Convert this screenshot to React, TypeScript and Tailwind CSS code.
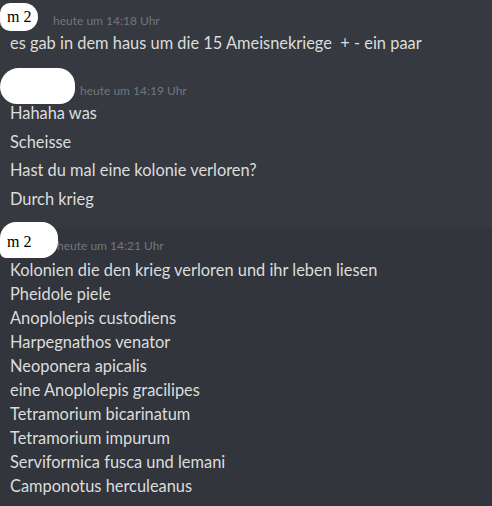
import React from "react";

const font = { fontFamily: "Lato, 'Noto Sans', sans-serif" };

function Line({ children }: { children: React.ReactNode }) {
  return <div className="h-[24px] leading-[24px] pl-[10px] text-[16.4px] text-[#dcddde] whitespace-pre">{children}</div>;
}

function Stamp({ children }: { children: React.ReactNode }) {
  return <span className="text-[12px] text-[#72767d] whitespace-pre">{children}</span>;
}

export default function App() {
  const list = [
    "Kolonien die den krieg verloren und ihr leben liesen",
    "Pheidole piele",
    "Anoplolepis custodiens",
    "Harpegnathos venator",
    "Neoponera apicalis",
    "eine Anoplolepis gracilipes",
    "Tetramorium bicarinatum",
    "Tetramorium impurum",
    "Serviformica fusca und lemani",
    "Camponotus herculeanus",
  ];
  return (
    <div className="w-[492px] h-[506px] bg-[#36393f] overflow-hidden flex flex-col" style={font}>
      {/* group 1 */}
      <div className="pt-[3px]">
        <div className="flex items-center h-[28px]">
          <div className="w-[38px] h-[28px] bg-white rounded-r-[14px] rounded-l-[10px] flex items-center pl-[7px] text-black text-[16px] font-['Liberation_Serif',serif]">
            m 2
          </div>
          <div className="ml-[15px] mt-[3px]">
            <Stamp>heute um 14:18 Uhr</Stamp>
          </div>
        </div>
        <Line>es gab in dem haus um die 15 Ameisnekriege  + - ein paar</Line>
      </div>

      {/* group 2 */}
      <div className="pt-[13px]">
        <div className="flex items-end h-[33px]">
          <div className="w-[75px] h-[36px] bg-white rounded-[18px] rounded-tl-[20px] rounded-br-[16px] self-start" />
          <div className="ml-[5px] mb-[0px]">
            <Stamp>heute um 14:19 Uhr</Stamp>
          </div>
        </div>
        <div className="flex flex-col gap-[4.5px]">
          <Line>Hahaha was</Line>
          <Line>Scheisse</Line>
          <Line>Hast du mal eine kolonie verloren?</Line>
          <Line>Durch krieg</Line>
        </div>
      </div>

      {/* group 3 */}
      <div className="mt-[17px] flex-1 bg-[#32353b]">
        <div className="flex h-[30px] -mt-[6px] relative">
          <div className="w-[58px] h-[36px] bg-white rounded-[16px] rounded-bl-[6px] flex items-start pt-[8px] pl-[7px] text-black text-[16px] font-['Liberation_Serif',serif] relative z-10">
            m 2
          </div>
          <div className="-ml-[1px] mt-[10px]">
            <Stamp>heute um 14:21 Uhr</Stamp>
          </div>
        </div>
        <div className="pt-[6px]">
          {list.map((t) => (
            <Line key={t}>{t}</Line>
          ))}
        </div>
      </div>
    </div>
  );
}
